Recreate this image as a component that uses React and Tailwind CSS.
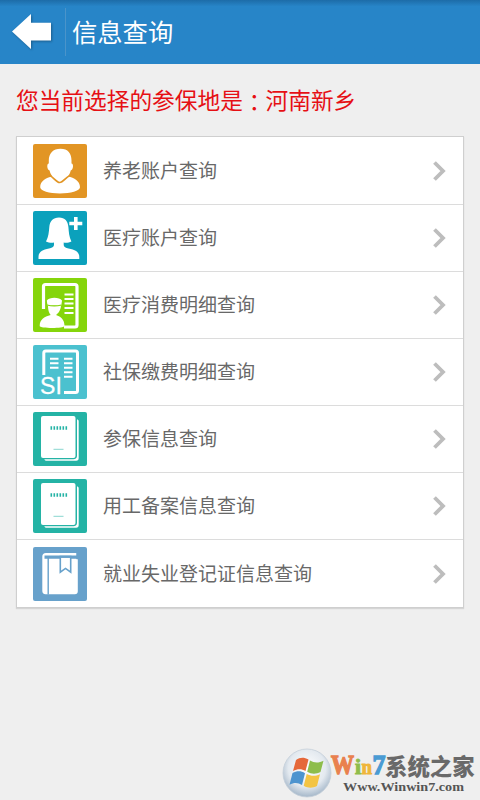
import React from "react";

const PensionIcon = () => (
  <svg viewBox="0 0 54 54" className="h-[54px] w-[54px] shrink-0">
    <rect width="54" height="54" rx="2" fill="#e29524" />
    <path
      fill="#fff"
      d="M27.500 4.800C20 4.800 15.800 9.500 15.800 16.500V19.500c-2.400.3-1.800 6.300.8 7 .5 2.500 1.500 4.300 2.700 5.800C13 33.800 7.200 37 7.200 43.300c0 3.500 9 6.200 19.700 6.200S47 46.800 47 43.300c0-6.300-5.800-9.500-12-11 1.200-1.500 2.200-3.300 2.700-5.800 2.700-.7 3.200-6.700.8-7v-3C38.500 9.500 35 4.800 27.500 4.800Z"
    />
    <path d="M17 31.800c3.500 1.200 6.200 6.700 9.700 6.700s6.300-5.500 10-6.700" fill="none" stroke="#e29524" strokeWidth="1.700" />
  </svg>
);

const MedicalIcon = () => (
  <svg viewBox="0 0 54 54" className="h-[54px] w-[54px] shrink-0">
    <rect width="54" height="54" rx="2" fill="#0ba1bc" />
    <path
      fill="#fff"
      d="M26 6.500c-6 0-9.200 3.800-9.700 9.500-.4 5-.8 10-3.300 14.500 2.200 1.200 5.500 1.500 8 1.100v2.400c0 2-2.300 2.800-5 3.400C9.500 38.900 5.500 40.500 5.500 46v2h40.800v-2c0-5.500-4-7.100-10.800-8.600-2.700-.6-4.800-1.400-4.800-3.400v-2.400c2.500.4 5.500.1 7.700-1.100-2.300-4.500-2.600-9.500-3-14.500C34.900 10.300 32 6.500 26 6.500Z"
    />
    <path d="M42.800 6v13M36.300 12.500h13" stroke="#fff" strokeWidth="3.600" />
  </svg>
);

const MedicalDetailIcon = () => (
  <svg viewBox="0 0 54 54" className="h-[54px] w-[54px] shrink-0">
    <rect width="54" height="54" rx="2" fill="#85d50b" />
    <path d="M10.500 31V8.500a2 2 0 0 1 2-2H42a2 2 0 0 1 2 2V47a2 2 0 0 1-2 2H31" fill="none" stroke="#fff" strokeWidth="3.200" />
    <path d="M31.500 16.500h9M31.500 21h9M31.500 25.500h9M31.500 30h9M31.500 35h9" stroke="#fff" strokeWidth="2" />
    <path
      fill="#fff"
      d="M15 27.500c0 5 1.200 7.500 2.700 9.500C11 38.800 6.700 41.500 6.700 48c0 2.600 24.800 2.600 24.800 0 0-6.500-3.500-9.200-8.500-11 2.500-2 4.700-4.700 5-9.500Z"
    />
    <path fill="#fff" d="M13.800 22.500c2.500-3.700 12.700-3.700 15.200 0l-.7 5H14.500Z" />
    <path d="M14 27c4 1 10.500 1 14.500 0" fill="none" stroke="#85d50b" strokeWidth="1.200" />
  </svg>
);

const SocialDetailIcon = () => (
  <svg viewBox="0 0 54 54" className="h-[54px] w-[54px] shrink-0">
    <rect width="54" height="54" rx="2" fill="#4bc1cf" />
    <path d="M10.800 30V8a2 2 0 0 1 2-2H42.500a2 2 0 0 1 2 2v37.500a2 2 0 0 1-2 2H31" fill="none" stroke="#fff" strokeWidth="3" />
    <path d="M17 13.800h8.500M17 18.300h8.500M17 22.800h8.500M31 13.800h8.500M31 18.300h8.500M31 22.800h8.500M31 27.300h8.500M31 31.800h8.500" stroke="#fff" strokeWidth="1.900" />
    <text x="7" y="48.500" fill="#fff" stroke="#fff" strokeWidth=".3" fontSize="23" fontFamily="Liberation Sans, sans-serif" textLength="22">
      SI
    </text>
  </svg>
);

const BookletIcon = () => (
  <svg viewBox="0 0 54 54" className="h-[54px] w-[54px] shrink-0">
    <rect width="54" height="54" rx="2" fill="#24b3a5" />
    <path d="M44 7.500c1 0 1.700.6 1.700 1.700V46c0 1.800-.8 2.700-2.500 2.700H14c-1.500 0-2.200-.5-2.700-1.500h29c2.500 0 3.700-1.200 3.700-3.400Z" fill="#fff" />
    <rect x="8" y="4" width="34.500" height="42" rx="2" fill="#fff" />
    <path d="M17.500 16h17" stroke="#24b3a5" strokeWidth="3.500" strokeDasharray="1.600 1.400" />
    <path d="M20.500 37.300h10" stroke="#24b3a5" strokeWidth=".9" opacity=".6" />
  </svg>
);

const BookmarkIcon = () => (
  <svg viewBox="0 0 54 54" className="h-[54px] w-[54px] shrink-0">
    <rect width="54" height="54" rx="2" fill="#67a1cb" />
    <path d="M43.500 6H13C10.500 6 9.300 7.500 9.300 9.500V44c0 2 1 3.200 3.200 3.200h29.300c2 0 3-1 3-3V12.300h-1.300Z" fill="#fff" />
    <path d="M11.500 10.200h33.500" stroke="#67a1cb" strokeWidth="3.200" />
    <path d="M43.500 5h3v7h-3z" fill="#67a1cb" />
    <path d="M15.200 11v36.500" stroke="#67a1cb" strokeWidth="1.400" />
    <path d="M27.300 10.500v14.700l5.200-3.800 5.200 3.800V10.500" fill="#fff" stroke="#67a1cb" strokeWidth="1.600" />
    <path d="M26.500 9.800h12" stroke="#67a1cb" strokeWidth="2.200" />
  </svg>
);

const items = [
  { label: "养老账户查询", Icon: PensionIcon },
  { label: "医疗账户查询", Icon: MedicalIcon },
  { label: "医疗消费明细查询", Icon: MedicalDetailIcon },
  { label: "社保缴费明细查询", Icon: SocialDetailIcon },
  { label: "参保信息查询", Icon: BookletIcon },
  { label: "用工备案信息查询", Icon: BookletIcon },
  { label: "就业失业登记证信息查询", Icon: BookmarkIcon },
];

const Header = () => (
  <header className="flex h-16 items-center bg-gradient-to-b from-[#1d6ca8] via-[#2785c8] via-10% to-[#2785c8]">
    <button className="ml-3 h-[38px] w-10 shrink-0" aria-label="返回">
      <svg viewBox="0 0 40 38" className="h-[38px] w-10 drop-shadow-[1px_1px_1px_rgba(0,0,0,0.3)]">
        <path d="M0 18.500 19 1v8.700h20v17.800H19V36Z" fill="#fff" />
      </svg>
    </button>
    <div className="ml-[13px] h-12 w-px bg-[#4a94ca]" />
    <h1 className="-mt-0.5 ml-1.5 text-[25.3px] leading-8 text-white">信息查询</h1>
  </header>
);

const Watermark = () => (
  <div className="absolute top-[748px] left-[282px] flex w-[198px]">
    <svg viewBox="0 0 50 50" className="h-[50px] w-[50px] shrink-0">
      <defs>
        <radialGradient id="orb" cx=".5" cy=".4" r=".6">
          <stop offset="0" stopColor="#fff" />
          <stop offset=".65" stopColor="#e3e9ef" />
          <stop offset="1" stopColor="#a5b7c9" />
        </radialGradient>
      </defs>
      <circle cx="25" cy="25" r="24" fill="url(#orb)" stroke="#c5cfd9" strokeWidth=".8" />
      <path d="M14 12c4-3 8-3 12.500-.5L23.500 23c-4-2.400-8-2.300-12.500 0Z" fill="#e5683a" />
      <path d="M28 12.500c4 2.400 8.500 2.700 13.500.2L38.500 24c-4.500 2.300-9 2.300-13.300-.2Z" fill="#8dbd4b" />
      <path d="M10.500 25c4.500-2.300 8.500-2.300 12.500.2L20 37c-4-2.600-8-2.800-12.500-.3Z" fill="#4d94cf" />
      <path d="M24.700 26c4.300 2.300 8.500 2.500 13.300.2L35 38c-4.500 2.300-9 2.300-13.300-.3Z" fill="#f3c443" />
    </svg>
    <div className="flex flex-col">
      <div className="flex h-[31px] items-start font-bold">
        <svg viewBox="0 0 54 31" className="h-[31px] w-[54px] shrink-0 overflow-visible font-['Liberation_Serif',serif]">
          <text x="-1" y="25.500" fontSize="27" fill="#e9814e" stroke="#e9814e" strokeWidth="1.400" textLength="23" lengthAdjust="spacingAndGlyphs">W</text>
          <text x="23" y="25.500" fontSize="20" fill="#8fbd4b" stroke="#8fbd4b" strokeWidth="1" textLength="6" lengthAdjust="spacingAndGlyphs">i</text>
          <text x="29.500" y="25.500" fontSize="21" fill="#efb63b" stroke="#efb63b" strokeWidth="1" textLength="10.500" lengthAdjust="spacingAndGlyphs">n</text>
          <text x="40.500" y="25.500" fontSize="27" fill="#4a9bd3" stroke="#4a9bd3" strokeWidth="1.400" textLength="13" lengthAdjust="spacingAndGlyphs">7</text>
        </svg>
        <span className="-ml-px pt-[3px] text-[22.400px] leading-[28px] font-black whitespace-nowrap text-[#696969]">系统之家</span>
      </div>
      <svg viewBox="0 0 134 16" className="ml-2 h-4 w-[134px]">
        <text x="3" y="11.500" textLength="121" lengthAdjust="spacingAndGlyphs" fontSize="13.500" fontWeight="700" fontFamily="Liberation Serif, serif" fill="#555">
          Www.Winwin7.com
        </text>
      </svg>
    </div>
  </div>
);

export default function App() {
  return (
    <div className="relative h-[800px] w-[480px] overflow-hidden bg-[#efefef] font-['Noto_Sans_CJK_SC',sans-serif]">
      <Header />
      <main className="px-4 pt-5">
        <p className="h-8 text-[22.7px] leading-8 whitespace-nowrap text-[#e60f14]">
          您当前选择的参保地是
          <span className="relative top-0.5 font-['Noto_Sans_CJK_TC',sans-serif]" lang="zh-TW">：</span>
          河南新乡
        </p>
        <ul className="mt-5 border border-[#cfcfcf] bg-white shadow-[0_1px_1px_#d5d5d5]">
          {items.map(({ label, Icon }) => (
            <li
              key={label}
              className="flex h-[67px] items-center border-b border-[#dcdcdc] pr-[17px] pl-4 first:h-[68px] last:border-b-0"
            >
              <Icon />
              <span className="-mt-0.5 ml-4 flex-1 text-[19px] leading-7 text-[#686868]">{label}</span>
              <svg viewBox="0 0 14 20" className="h-5 w-3.5 shrink-0">
                <path d="m2.500 1.500 8.500 8.500-8.500 8.500" fill="none" stroke="#bdbdbd" strokeWidth="3.800" />
              </svg>
            </li>
          ))}
        </ul>
      </main>
      <Watermark />
    </div>
  );
}
